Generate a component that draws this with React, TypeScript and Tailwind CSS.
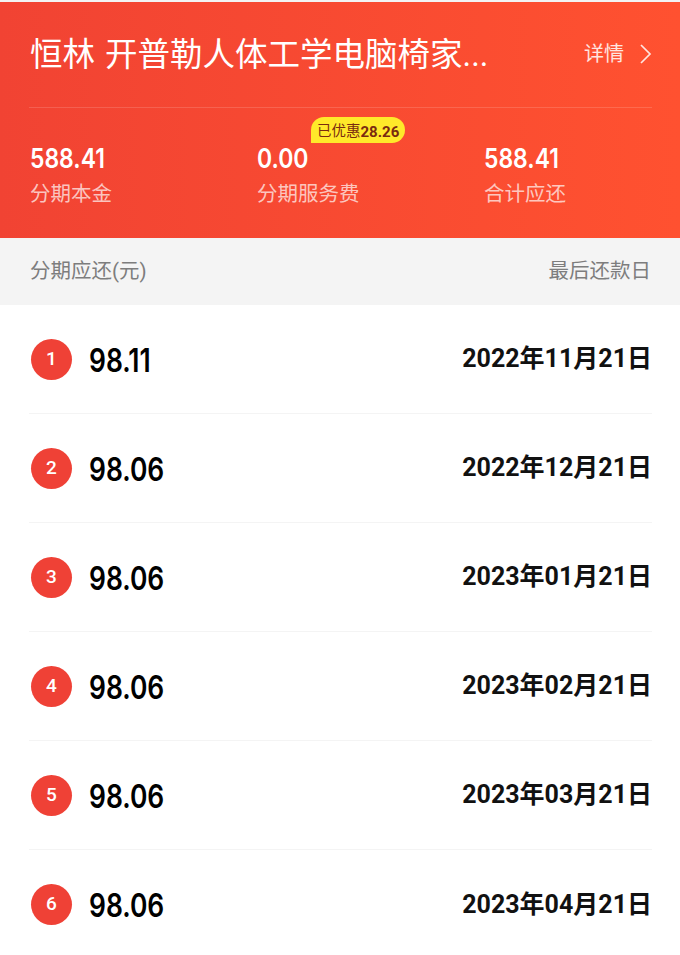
const font = "font-['Roboto','Noto_Sans_CJK_SC',sans-serif]"
const digits = "font-['Inter','Roboto',sans-serif]"

const summary = [
  { value: '588.41', label: '分期本金' },
  { value: '0.00', label: '分期服务费', badge: true },
  { value: '588.41', label: '合计应还' },
]

const rows = [
  { n: 1, amount: '98.11', date: '2022年11月21日' },
  { n: 2, amount: '98.06', date: '2022年12月21日' },
  { n: 3, amount: '98.06', date: '2023年01月21日' },
  { n: 4, amount: '98.06', date: '2023年02月21日' },
  { n: 5, amount: '98.06', date: '2023年03月21日' },
  { n: 6, amount: '98.06', date: '2023年04月21日' },
]

export default function App() {
  return (
    <div className={`w-[680px] h-[955px] overflow-hidden bg-white ${font}`}>
      <div className="h-[2px] bg-[#f3f3f3]" />
      <div className="h-[236px] pl-[29px] pr-[28px] bg-linear-to-r from-[#f14333] to-[#ff5130]">
        <div className="h-[106px] flex justify-between items-center border-b border-white/15">
          <h1 className="ml-px text-[32.5px] leading-[40px] [word-spacing:2px] text-white whitespace-nowrap">恒林 开普勒人体工学电脑椅家...</h1>
          <div className="flex items-center gap-[15px] -mt-[1px] text-white/85 text-[20px] leading-[28px]">
            详情
            <svg width="13" height="20" viewBox="0 0 13 20" fill="none" stroke="currentColor" strokeWidth="1.7">
              <path d="M2 1 L11 10 L2 19" />
            </svg>
          </div>
        </div>
        <div className="grid grid-cols-[227px_227px_1fr] pt-[36px]">
          {summary.map((s, i) => (
            <div key={i} className="relative pl-px">
              {s.badge && (
                <div className="absolute left-[55px] -top-[27px] h-[26px] px-[6px] pt-[4px] flex items-center bg-[#ffe92a] rounded-t-[13px] rounded-br-[13px] text-[14.5px] text-[#7a2a10] whitespace-nowrap">
                  已优惠<span className="font-bold text-[15px]">28.26</span>
                </div>
              )}
              <div className={`${digits} inline-block origin-left scale-x-[0.85] text-[27px] leading-[30px] font-semibold text-white`}>{s.value}</div>
              <div className="text-[20.5px] leading-[28px] mt-[5px] text-white/70">{s.label}</div>
            </div>
          ))}
        </div>
      </div>
      <div className="h-[67px] pl-[30px] pr-[29px] flex justify-between items-center bg-[#f4f4f4] text-[20.5px] text-[#7d7d7d]">
        <span>分期应还(元)</span>
        <span>最后还款日</span>
      </div>
      <div className="pl-[29px] pr-[28px]">
        {rows.map((r, i) => (
          <div
            key={r.n}
            className={`h-[109px] flex items-center justify-between ${i < rows.length - 1 ? 'border-b border-[#f4f4f4]' : ''}`}
          >
            <div className="flex items-center">
              <span className="ml-[2px] size-[41px] rounded-full bg-[#ef4136] text-white text-[19px] font-medium flex items-center justify-center">{r.n}</span>
              <span className={`${digits} inline-block origin-left scale-x-[0.825] ml-[17px] mt-[3px] text-[32px] font-semibold text-black`}>{r.amount}</span>
            </div>
            <span className="text-[25px] font-bold text-[#111]">{r.date}</span>
          </div>
        ))}
      </div>
    </div>
  )
}
